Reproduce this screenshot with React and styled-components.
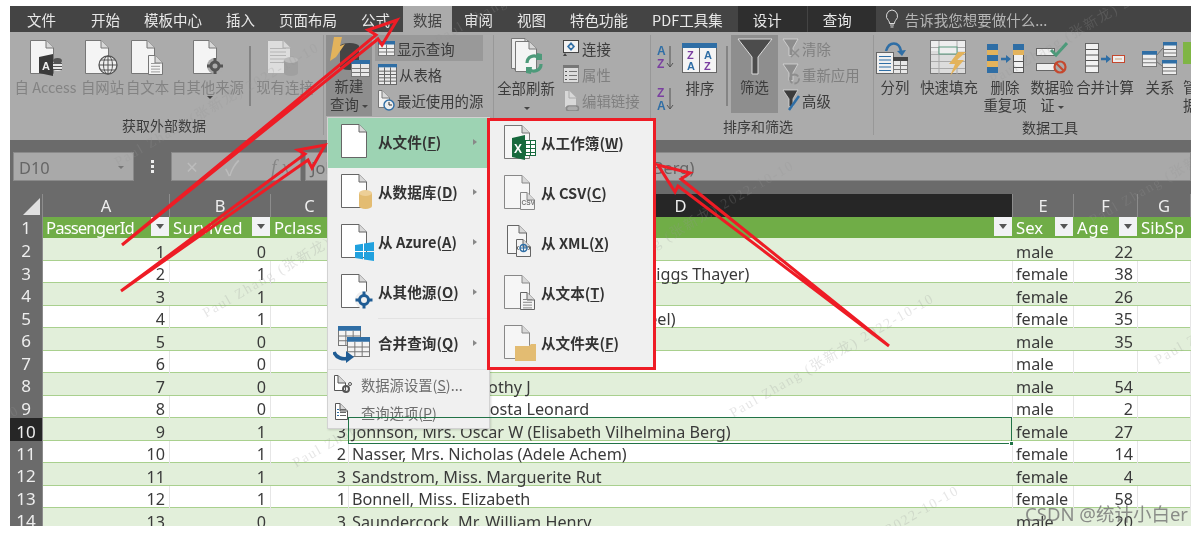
import React from "react";
import styled, { createGlobalStyle } from "styled-components";

const CJK = `"Noto Sans CJK SC", "Noto Sans", sans-serif`;
const SHEET = `"Noto Sans", "Noto Sans CJK SC", sans-serif`;
const RED = "#ee1c25";

const Global = createGlobalStyle`
  html, body { margin: 0; background: #fff; }
  body { font-family: ${CJK}; overflow: hidden; }
`;

const Frame = styled.div`
  position: relative; width: 1181px; height: 520px; margin: 6px 0 0 10px;
  overflow: hidden; background: #6b6b6b; filter: blur(0.45px);
`;

/* ---------- tabs ---------- */
const TabBar = styled.div`
  display: flex; height: 26px; background: #444; padding-left: 5px; align-items: stretch;
`;
const Tab = styled.div`
  display: flex; align-items: center; padding: 0 ${p => p.$pr ?? p.$pad ?? 12}px 0 ${p => p.$pad ?? 12}px;
  margin-left: ${p => p.$ml ?? 0}px; font-size: 14.5px; white-space: nowrap;
  color: ${p => (p.$active ? "#444" : "#e8e8e8")};
  background: ${p => (p.$active ? "#ababab" : p.$ctx ? "#2e2e2e" : "transparent")};
`;
const Hint = styled.div`
  display: flex; align-items: center; gap: 6px; margin-left: 9px; color: #b5b5b5; font-size: 14.5px;
`;

/* ---------- ribbon ---------- */
const Ribbon = styled.div`display: flex; height: 108px; background: #ababab;`;
const Group = styled.div`
  display: flex; flex-direction: column; width: ${p => p.$w}px; flex: none;
  border-right: 1px solid ${p => (p.$last ? "transparent" : "#989898")}; margin: 3px 0 5px; box-sizing: border-box;
`;
const GroupBody = styled.div`display: flex; height: 81px; padding: 0 ${p => p.$pad ?? 0}px;`;
const GroupLabel = styled.div`
  flex: 1; display: flex; align-items: center; justify-content: center; font-size: 14px; color: #3c3c3c;
  padding: 3px ${p => p.$pr ?? 0}px 0 ${p => p.$pl ?? 0}px;
`;
const BigButton = styled.div`
  display: flex; flex-direction: column; align-items: ${p => (p.$clip ? "flex-start" : "center")}; flex: none; box-sizing: border-box;
  width: ${p => p.$w}px; padding-top: ${p => p.$top ?? 4}px;
  margin-left: ${p => p.$ml ?? 0}px; overflow: ${p => (p.$clip ? "hidden" : "visible")};
  background: ${p => (p.$on ? "#8e8e8e" : "transparent")};
  color: ${p => (p.$off ? "#838383" : "#3c3c3c")};
`;
const IconBox = styled.div`
  height: ${p => p.$h ?? 38}px; display: flex; align-items: center; justify-content: center;
`;
const BigLabel = styled.div`
  font-size: 14.4px; line-height: 18px; text-align: center; white-space: nowrap; margin-top: ${p => p.$mt ?? 1}px;
`;
const Caret = styled.span`
  display: inline-block; width: 0; height: 0; vertical-align: middle; margin-left: 3px;
  border: 3px solid transparent; border-top: 3px solid #444; border-bottom: 0;
`;
const Divider = styled.div`
  width: 2px; height: 60px; background: #848484; flex: none;
  margin: 11px ${p => p.$mr ?? 4}px 0 ${p => p.$ml ?? 4}px;
`;
const SmallStack = styled.div`display: flex; flex-direction: column; margin-left: ${p => p.$ml ?? 0}px;`;
const SmallRow = styled.div`
  display: flex; align-items: center; gap: 2px; height: 26px; padding: 0 ${p => p.$pad ?? 0}px 0 2px; white-space: nowrap;
  font-size: 14.4px; color: ${p => (p.$off ? "#808080" : "#3c3c3c")};
  background: ${p => (p.$on ? "#999" : "transparent")};
`;
const SortColumn = styled.div`display: flex; flex-direction: column; gap: 14px; padding-top: 8px; margin-right: 5px;`;

/* ---------- formula bar ---------- */
const Strip = styled.div`height: ${p => p.$h}px; background: #6b6b6b;`;
const FormulaBar = styled.div`display: flex; height: 29px; background: #6b6b6b; padding-left: 3px;`;
const Field = styled.div`
  position: relative; display: flex; align-items: center; box-sizing: border-box; background: #a9a9a9; border: 1px solid #8a8a8a;
  width: ${p => p.$w}px; margin-left: ${p => p.$ml ?? 0}px; flex: ${p => (p.$w ? "none" : 1)};
  padding: 2px 5px 0; color: #666; font-family: ${SHEET}; font-size: 16.4px; overflow: hidden; white-space: nowrap;
`;
const NameCaret = styled.span`
  margin-left: auto; margin-right: 4px; border: 3.5px solid transparent; border-top: 3.5px solid #777; border-bottom: 0;
`;
const Dots = styled.div`
  width: 37px; flex: none; display: flex; flex-direction: column; gap: 2px; align-items: center; justify-content: center;
  i { display: block; width: 3px; height: 3px; background: #eee; }
`;
const FxIcons = styled.div`
  display: flex; align-items: center; width: 100%; color: #bcbcbc; font-size: 21px; gap: 27px; padding-left: 14px;
  em { margin-left: 5px; font-family: "Liberation Serif", serif; color: #858585; font-size: 19px; white-space: nowrap; }
`;

/* ---------- grid ---------- */
const COLS = "33px 127px 101px 78px 664px 61px 64px 53px";
const Grid = styled.div`font-family: ${SHEET};`;
const ColHead = styled.div`display: grid; grid-template-columns: ${COLS}; height: 21px; background: #6b6b6b;`;
const ColCell = styled.div`
  display: flex; align-items: center; justify-content: center; color: #eee; font-size: 16.5px;
  background: ${p => (p.$sel ? "#262626" : "#6b6b6b")}; border-right: 1px solid #8c8c8c;
`;
const Corner = styled.div`
  position: relative; border-right: 1px solid #8c8c8c;
  &::after { content: ""; position: absolute; right: 2px; bottom: 2px; border-style: solid; border-width: 0 0 17px 17px;
    border-color: transparent transparent #e0e0e0 transparent; }
`;
const Row = styled.div`
  display: grid; grid-template-columns: ${COLS}; height: ${p => p.$h ?? 22.5}px; box-sizing: border-box;
  background: ${p => (p.$head ? "#70ad47" : p.$band ? "#e2efda" : "#fff")};
  border-bottom: 1px solid ${p => (p.$head ? "#70ad47" : "#a9d08e")};
`;
const RowNo = styled.div`
  display: flex; align-items: center; justify-content: center; font-size: 17px; padding-top: 1px; box-sizing: border-box; color: #eee;
  background: ${p => (p.$sel ? "#262626" : "#6b6b6b")}; border-bottom: 1px solid #a8a8a8; margin-bottom: -1px;
  border-right: 1px solid #8c8c8c;
`;
const Cell = styled.div`
  position: relative; display: flex; align-items: center; justify-content: ${p => (p.$num ? "flex-end" : "flex-start")};
  padding: ${p => (p.$num ? `3px ${p.$pr ?? 4}px 0 0` : "3px 0 0 3px")}; font-size: 16.2px; color: #3a3a3a; white-space: nowrap; overflow: ${p => (p.$over ? "visible" : "hidden")};
  border-right: 1px solid ${p => (p.$band ? "transparent" : "#e6e6e6")}; box-sizing: border-box; min-width: 0;
`;
const HeadCell = styled.div`
  position: relative; display: flex; align-items: center; padding: 1px 0 0 3px; color: #fff; font-size: 16.7px; overflow: hidden; white-space: nowrap;
  letter-spacing: ${p => p.$track ?? 0}px;
`;
const FilterBtn = styled.div`
  position: absolute; right: 1px; top: 2px; width: 18px; height: 19px; background: #f1f2f4; display: flex;
  align-items: center; justify-content: center;
  &::after { content: ""; border: 4px solid transparent; border-top: 5px solid #555; border-bottom: 0; }
`;
const Selected = styled.div`
  position: absolute; inset: -1px 0 -1px -1px; border: 1.5px solid #217346; pointer-events: none; z-index: 1;
  &::after { content: ""; position: absolute; right: -3px; bottom: -3px; width: 5px; height: 5px; background: #217346; border: 1px solid #fff; box-sizing: border-box; }
`;

/* ---------- watermark ---------- */
const Mark = styled.div`
  position: absolute; left: ${p => p.$x}px; top: ${p => p.$y}px; transform-origin: left top; transform: rotate(-30deg);
  font-family: "Liberation Serif", "Noto Sans CJK SC", serif; font-size: 14px; letter-spacing: 1.7px; white-space: nowrap;
  color: rgba(150,150,150,.24); pointer-events: none;
`;
const Signature = styled.div`
  position: absolute; right: 3px; bottom: 0; font-family: "Noto Sans", "Noto Sans CJK SC", sans-serif; font-size: 18.5px; line-height: 24px; color: rgba(115,115,115,.8); white-space: nowrap;
`;

/* ---------- menu ---------- */
const Flyout = styled.div`position: absolute; left: 317px; top: 111px; display: flex; align-items: flex-start;`;
const MainMenu = styled.div`
  width: 163px; height: 312px; background: #f0f0f0; box-sizing: border-box; border: 1px solid #d2d2d2; flex: none;
  box-shadow: 1px 1px 2px rgba(0,0,0,.15);
`;
const MenuRow = styled.div`
  position: relative; display: flex; align-items: center; box-sizing: border-box; height: 50px;
  padding: 0 0 4px ${p => p.$pl ?? 12}px; font-size: 14.6px; font-weight: 700; color: #333;
  background: ${p => (p.$on ? "#9dd3b3" : "transparent")}; white-space: nowrap;
  u { text-underline-offset: 2px; }
  &::after { content: ""; display: ${p => (p.$sub ? "block" : "none")}; position: absolute; left: 145px; top: 21px;
    border: 3.5px solid transparent; border-left: 4px solid #888; border-right: 0; }
`;
const MenuIcon = styled.div`width: ${p => p.$w ?? 38}px; flex: none; display: flex; margin-top: 4px;`;
const MenuSep = styled.div`height: 1px; background: #e2e2e2; margin-left: ${p => p.$ml ?? 0}px;`;
const MenuSmall = styled.div`
  display: flex; align-items: center; height: 28px; gap: 8px; padding-left: 5px; font-size: 14.3px; color: #6e6e6e; white-space: nowrap;
`;
const SubMenu = styled.div`
  width: 169px; height: 252px; box-sizing: border-box; flex: none; margin: 1px 0 0 -3px; background: #f0f0f0;
  border: 3px solid ${RED}; position: relative;
`;
const SubList = styled.div`margin-top: -2px;`;
const Arrows = styled.svg`position: absolute; left: 0; top: 0; width: 1181px; height: 520px; pointer-events: none;`;

/* ---------- icon parts ---------- */
const Page = ({ x = 0, y = 0, w = 26, h = 34, f = "#f4f4f4", s = "#777" }) => (
  <g>
    <path d={`M${x + .5} ${y + .5}H${x + w - 8}L${x + w - .5} ${y + 8}V${y + h - .5}H${x + .5}Z`} fill={f} stroke={s} />
    <path d={`M${x + w - 8} ${y + .5}V${y + 8}H${x + w - .5}`} fill="#d8d8d8" stroke={s} />
  </g>
);
const Lines = ({ x, y, w, n, gap = 3, c = "#999" }) => (
  <g stroke={c}>{Array.from({ length: n }, (_, i) => <path key={i} d={`M${x} ${y + i * gap + .5}h${w}`} />)}</g>
);
const Cyl = ({ x, y, w, h, c, top }) => (
  <g>
    <path d={`M${x} ${y + 3}v${h - 6}a${w / 2} 3 0 0 0 ${w} 0v-${h - 6}z`} fill={c} />
    <ellipse cx={x + w / 2} cy={y + 3} rx={w / 2} ry="3" fill={top ?? c} />
  </g>
);
const Table = ({ x, y, w, h, rows = 3, cols = 2, head = "#2f6ea5", f = "#eee", s = "#777" }) => (
  <g>
    <rect x={x + .5} y={y + .5} width={w} height={h} fill={f} stroke={s} />
    <rect x={x} y={y} width={w + 1} height={h / (rows + 1)} fill={head} />
    {Array.from({ length: rows - 1 }, (_, i) => <path key={i} d={`M${x} ${y + .5 + (h * (i + 2)) / (rows + 1)}h${w}`} stroke={s} />)}
    {Array.from({ length: cols - 1 }, (_, i) => <path key={i} d={`M${x + .5 + (w * (i + 1)) / cols} ${y + h / (rows + 1)}v${h - h / (rows + 1)}`} stroke={s} />)}
  </g>
);
const Svg = ({ w, h, children }) => <svg width={w} height={h} viewBox={`0 0 ${w} ${h}`} style={{ display: "block", flex: "none" }}>{children}</svg>;
const Ring = ({ cx, cy, r = 5, c = "#555" }) => (
  <g>
    <circle cx={cx} cy={cy} r={r} fill="none" stroke={c} strokeWidth="3" />
    <path d={`M${cx - r - 4} ${cy}h4M${cx + r} ${cy}h4M${cx} ${cy - r - 4}v4M${cx} ${cy + r}v4`} stroke={c} strokeWidth="3" />
  </g>
);
const Funnel = ({ c = "#4d4d4d", w = 16 }) => (
  <path d={`M1 1H${w}L${w / 2 + 3} ${w * .62}V${w * 1.1}H${w / 2 - 1}V${w * .62}Z`} fill={c} stroke="#d8d8d8" strokeWidth=".8" />
);

const icons = {
  access: <Svg w={36} h={36}><Page x={2} y={0} w={24} h={34} /><path d="M11 17l14-3v22l-14-3z" fill="#3a3a3a" /><text x="14" y="30" fontSize="11" fontWeight="700" fill="#eee" fontFamily="Liberation Sans">A</text><Cyl x={25} y={18} w={9} h={13} c="#e8e8e8" top="#555" /><Lines x={25} y={23} w={9} n={3} c="#555" /></Svg>,
  web: <Svg w={36} h={36}><Page x={0} y={0} w={24} h={34} /><circle cx="23" cy="25" r="9" fill="#eee" stroke="#555" strokeWidth="1.3" /><path d="M14 25h18M23 16v18M16 20h14M16 30h14" stroke="#555" /><ellipse cx="23" cy="25" rx="4.5" ry="9" fill="none" stroke="#555" /></Svg>,
  text: <Svg w={34} h={36}><Page x={0} y={0} w={24} h={34} /><Page x={17} y={15} w={15} h={20} /><Lines x={20} y={23} w={9} n={4} gap={2.8} /></Svg>,
  other: <Svg w={36} h={36}><Page x={3} y={0} w={24} h={34} /><circle cx="25" cy="26" r="8" fill="#ababab" /><Ring cx={25} cy={26} r={4} /></Svg>,
  existing: <Svg w={36} h={36}><Page x={0} y={0} w={24} h={34} f="#ddd" s="#aaa" /><Lines x={3} y={8} w={16} n={5} gap={3.5} c="#b5b5b5" /><Cyl x={17} y={17} w={14} h={19} c="#a0a0a0" top="#bbb" /></Svg>,
  newq: <Svg w={44} h={42}><Cyl x={13} y={8} w={19} h={27} c="#444" /><path d="M15 2H7L3 26l6-4 9-13-5 2z" fill="#e3b35c" /><Table x={24} y={25} w={18} h={16} rows={3} cols={2} f="#e8e8e8" /></Svg>,
  show: <Svg w={18} h={18}><Table x={1} y={2} w={16} h={14} rows={3} cols={2} head="#2f6ea5" f="#f0f0f0" /></Svg>,
  table: <Svg w={20} h={22}><Table x={1} y={1} w={18} h={20} rows={5} cols={3} head="#2f6ea5" f="#eaeaea" s="#666" /></Svg>,
  recent: <Svg w={18} h={22}><Page x={1} y={1} w={12} h={18} /><circle cx="12" cy="16" r="5" fill="#eee" stroke="#2f6ea5" strokeWidth="1.4" /><path d="M12 13v3h3" stroke="#333" fill="none" /></Svg>,
  refresh: (
    <Svg w={38} h={44}>
      <Page x={7} y={5} w={22} h={30} f="#eee" /><Page x={4} y={3} w={22} h={31} f="#eee" /><Page x={8} y={6} w={22} h={31} />
      <path d="M20 28a7 7 0 0 1 12-5M34 29a7 7 0 0 1-12 5" fill="none" stroke="#4d9a7a" strokeWidth="3.2" />
      <path d="M30 18l5 1v6h-6zM24 39l-5-1v-6h6z" fill="#4d9a7a" />
    </Svg>
  ),
  conn: <Svg w={18} h={18}><rect x="1.5" y="1.5" width="15" height="12" fill="#f2f2f2" stroke="#444" /><path d="M3 14l-2 3h4z" fill="#444" /><path d="M9 3l4 4.500-4 4.500-4-4.500z" fill="#2f6ea5" /><circle cx="9" cy="7.500" r="1.500" fill="#eee" /></Svg>,
  prop: <Svg w={18} h={20}><rect x="1.500" y="1.500" width="15" height="17" fill="#ddd" stroke="#888" /><rect x="1" y="1" width="16" height="3" fill="#777" /><Lines x={7} y={7} w={8} n={3} gap={4} c="#777" /><Lines x={3} y={7} w={2} n={3} gap={4} c="#555" /></Svg>,
  links: <Svg w={18} h={22}><Page x={2} y={1} w={13} h={18} f="#d8d8d8" s="#aaa" /><path d="M7 17h7a2.500 2.500 0 0 1 0 5H7a2.500 2.500 0 0 1 0-5z" fill="none" stroke="#888" strokeWidth="1.500" /></Svg>,
  az: <Svg w={18} h={28}><text x="0" y="12" fontSize="12" fontWeight="700" fill="#2f6ea5" fontFamily="Liberation Sans">A</text><text x="0" y="25" fontSize="12" fontWeight="700" fill="#7a3fa0" fontFamily="Liberation Sans">Z</text><path d="M13 3v21M10 20l3 4 3-4" stroke="#555" fill="none" /></Svg>,
  za: <Svg w={18} h={28}><text x="0" y="12" fontSize="12" fontWeight="700" fill="#7a3fa0" fontFamily="Liberation Sans">Z</text><text x="0" y="25" fontSize="12" fontWeight="700" fill="#2f6ea5" fontFamily="Liberation Sans">A</text><path d="M13 3v21M10 20l3 4 3-4" stroke="#555" fill="none" /></Svg>,
  sort: <Svg w={36} h={30}><rect x=".5" y=".5" width="34" height="29" fill="#f4f4f4" stroke="#666" /><rect x="0" y="0" width="35" height="5" fill="#2f6ea5" /><path d="M17.500 5v25" stroke="#666" /><g fontSize="11" fontWeight="700" fontFamily="Liberation Sans"><text x="5" y="16" fill="#7a3fa0">Z</text><text x="5" y="27" fill="#2f6ea5">A</text><text x="22" y="16" fill="#2f6ea5">A</text><text x="22" y="27" fill="#7a3fa0">Z</text></g></Svg>,
  funnel: <Svg w={36} h={38}><path d="M1 1H35L21 19V36H15V19Z" fill="#4c4c4c" stroke="#dcdcdc" /></Svg>,
  clear: <Svg w={18} h={20}><Funnel c="#8d8d8d" /><path d="M9 11l8 8M17 11l-8 8" stroke="#8d8d8d" strokeWidth="1.500" /></Svg>,
  reapply: <Svg w={18} h={22}><Funnel c="#8d8d8d" /><circle cx="12.500" cy="16" r="4.500" fill="none" stroke="#8d8d8d" strokeWidth="1.800" strokeDasharray="7 2" /></Svg>,
  adv: <Svg w={18} h={22}><Funnel c="#3c3c3c" /><path d="M17 7L7 21" stroke="#2f6ea5" strokeWidth="2.500" /></Svg>,
  split: <Svg w={38} h={32}><rect x=".5" y="10.500" width="17" height="21" fill="#f0f0f0" stroke="#666" /><Lines x={3} y={14} w={12} n={5} gap={3.500} c="#2f6ea5" /><Table x={17} y={15} w={14} h={16} rows={3} cols={2} head="#444" f="#e8e8e8" /><path d="M10 9c3-10 13-10 15 0" fill="none" stroke="#2f6ea5" strokeWidth="2.500" /><path d="M21 9l5 5 4-6z" fill="#2f6ea5" /></Svg>,
  flash: <Svg w={38} h={36}><rect x=".5" y=".5" width="35" height="33" fill="#dcdcdc" stroke="#777" /><rect x="1" y="1" width="34" height="10" fill="#eee" /><Lines x={1} y={7} w={34} n={4} gap={7} c="#aaa" /><path d="M9 1v33M27 1v33" stroke="#aaa" /><rect x="9" y="7" width="18" height="7" fill="#eee" stroke="#5d9c80" /><path d="M36 12h-8l-9 12h6l-5 12 14-16h-7z" fill="#e3b35c" /></Svg>,
  dedupe: <Svg w={38} h={30}><rect x="1" y="1" width="11" height="29" fill="#2f6ea5" /><rect x="1" y="7" width="11" height="5" fill="#e3b35c" /><rect x="1" y="18" width="11" height="6" fill="#e3b35c" /><path d="M15 16h6" stroke="#2f6ea5" strokeWidth="2.500" /><path d="M20 12l5 4-5 4z" fill="#2f6ea5" /><rect x="27.500" y="1.500" width="10" height="28" fill="#f0f0f0" stroke="#555" /><rect x="27" y="1" width="11" height="6" fill="#2f6ea5" /><rect x="27" y="7" width="11" height="5" fill="#e3b35c" /><Lines x={27} y={18} w={11} n={2} gap={6} c="#555" /></Svg>,
  valid: <Svg w={32} h={32}><rect x=".5" y="6.500" width="18" height="7" fill="#f0f0f0" stroke="#666" /><rect x=".5" y="21.500" width="18" height="7" fill="#f0f0f0" stroke="#666" /><path d="M15 8l5 5 11-12" fill="none" stroke="#4d9a7a" strokeWidth="3" /><circle cx="24" cy="25" r="5.500" fill="none" stroke="#c5482e" strokeWidth="2.200" /><path d="M20 21l8 8" stroke="#c5482e" strokeWidth="2.200" /></Svg>,
  merge: <Svg w={40} h={30}><rect x=".5" y=".5" width="13" height="29" fill="#f2f2f2" stroke="#666" /><Lines x={1} y={6} w={13} n={4} gap={5.500} c="#555" /><path d="M16 16h6" stroke="#2f6ea5" strokeWidth="2.500" /><path d="M21 12l5 4-5 4z" fill="#2f6ea5" /><rect x="27.500" y="12.500" width="12" height="7" fill="#eee" stroke="#c5482e" /><path d="M30 16h7" stroke="#c9a27a" /></Svg>,
  rel: <Svg w={36} h={34}><Table x={0} y={10} w={14} h={15} rows={3} cols={1} /><Table x={21} y={1} w={13} h={14} rows={3} cols={1} /><Table x={20} y={19} w={14} h={14} rows={3} cols={1} /><path d="M14 15l7-8M14 20l6 5" stroke="#777" /></Svg>,
  manage: <Svg w={12} h={34}><rect x="0" y="1" width="12" height="22" fill="#7fb545" /></Svg>,
  bulb: <Svg w={14} h={20}><path d="M7 1a6 6 0 0 0-3.500 10.500c.8.800 1 2 1 3h5c0-1 .2-2.200 1-3A6 6 0 0 0 7 1z" fill="none" stroke="#dcdcdc" /><path d="M5 16h4M5.500 18h3" stroke="#dcdcdc" /></Svg>,
};

const mPage = { w: 26, h: 34, f: "#fff", s: "#666" };
const MFile = ({ children, w = 34, h = 40 }) => <Svg w={w} h={h}>{children}</Svg>;
const menuIcons = {
  file: <MFile><Page x={1} y={1} {...mPage} /></MFile>,
  db: <MFile><Page x={1} y={1} {...mPage} /><Cyl x={19} y={17} w={13} h={19} c="#e3bc72" top="#edcf97" /></MFile>,
  azure: <MFile><Page x={1} y={1} {...mPage} /><path d="M15 22l8-1.200v7.200h-8zM24 20.600l10-1.500v8.900h-10zM15 29h8v7.200l-8-1.200zM24 29h10v8.900l-10-1.500z" fill="#21a1de" /></MFile>,
  other: <MFile><Page x={1} y={1} {...mPage} /><circle cx="24" cy="27" r="9" fill="#f0f0f0" /><Ring cx={24} cy={27} r={4.500} c="#1f5c94" /></MFile>,
  merge: <Svg w={38} h={38}><Table x={5} y={1} w={22} h={19} rows={3} cols={3} head="#2f6ea5" f="#f4f4f4" /><Table x={14} y={12} w={22} h={19} rows={3} cols={3} head="#2f6ea5" f="#f4f4f4" /><path d="M1 27c2 6 9 8 15 6" fill="none" stroke="#1f5c94" strokeWidth="3.500" /><path d="M13 26l8 6-8 6z" fill="#1f5c94" /></Svg>,
  wb: <MFile><Page x={1} y={1} {...mPage} s="#777" f="#f6f6f6" /><path d="M9 14l13-3v25l-13-3z" fill="#17693d" /><text x="11" y="29" fontSize="12" fontWeight="700" fill="#fff" fontFamily="Liberation Sans">X</text><rect x="22.500" y="16.500" width="10" height="15" fill="#fff" stroke="#17693d" /><Lines x={23} y={20} w={9} n={3} gap={4} c="#17693d" /><path d="M27.500 17v14" stroke="#17693d" /></MFile>,
  csv: <MFile><Page x={1} y={1} {...mPage} s="#888" f="#f6f6f6" /><Page x={17} y={18} w={15} h={18} s="#888" f="#f4f4f4" /><text x="18.500" y="31" fontSize="6.500" fill="#777" fontFamily="Liberation Sans">CSV</text></MFile>,
  xml: <MFile><Page x={4} y={1} w={20} h={29} s="#666" f="#f6f6f6" /><Page x={13} y={15} w={15} h={18} s="#666" f="#f4f4f4" /><circle cx="20.500" cy="24" r="3.500" fill="none" stroke="#2f6ea5" strokeWidth="1.500" /><path d="M17 24h7M20.500 20.500v7" stroke="#2f6ea5" /><path d="M15.500 22l-1.500 2 1.500 2M25.500 22l1.500 2-1.500 2" stroke="#555" fill="none" /></MFile>,
  txt: <MFile><Page x={1} y={1} {...mPage} s="#888" f="#f6f6f6" /><Page x={17} y={18} w={15} h={18} s="#666" f="#f4f4f4" /><Lines x={20} y={25} w={9} n={4} gap={2.800} c="#888" /></MFile>,
  folder: <MFile><Page x={1} y={1} {...mPage} s="#888" f="#f6f6f6" /><path d="M12 22h14l2-2h5v17H12z" fill="#e3bc72" /></MFile>,
  ds: <Svg w={20} h={20}><Page x={1} y={1} w={12} h={16} s="#555" f="#fff" /><circle cx="13" cy="15" r="3" fill="none" stroke="#555" strokeWidth="2" /><circle cx="17" cy="10" r="1.500" fill="none" stroke="#555" /></Svg>,
  opt: <Svg w={20} h={20}><Page x={2} y={1} w={13} h={17} s="#555" f="#fff" /><Lines x={7} y={7} w={6} n={3} gap={3} c="#666" /><Lines x={4} y={7} w={2} n={3} gap={3} c="#2f6ea5" /></Svg>,
};

const rows = [
  [1, 0, 3, "Braund, Mr. Owen Harris", "male", 22],
  [2, 1, 1, "Cumings, Mrs. John Bradley (Florence Briggs Thayer)", "female", 38],
  [3, 1, 3, "Heikkinen, Miss. Laina", "female", 26],
  [4, 1, 1, "Futrelle, Mrs. Jacques Heath (Lily May Peel)", "female", 35],
  [5, 0, 3, "Allen, Mr. William Henry", "male", 35],
  [6, 0, 3, "Moran, Mr. James", "male", ""],
  [7, 0, 1, "McCarthy, Mr. Timothy J", "male", 54],
  [8, 0, 3, "Palsson, Master. Gosta Leonard", "male", 2],
  [9, 1, 3, "Johnson, Mrs. Oscar W (Elisabeth Vilhelmina Berg)", "female", 27],
  [10, 1, 2, "Nasser, Mrs. Nicholas (Adele Achem)", "female", 14],
  [11, 1, 3, "Sandstrom, Miss. Marguerite Rut", "female", 4],
  [12, 1, 1, "Bonnell, Miss. Elizabeth", "female", 58],
  [13, 0, 3, "Saundercock, Mr. William Henry", "male", 20],
];

const MARK = "Paul Zhang (张新龙) 2022-10-10";
const marks = [
  [100, 147], [188, 298], [715, 398], [740, 590], [575, 265], [975, 65], [1075, 205], [-200, 510], [278, 448], [1140, 345], [420, 25],
];

const subItems = [
  ["wb", "从工作簿(", "W"], ["csv", "从 CSV(", "C"], ["xml", "从 XML(", "X"], ["txt", "从文本(", "T"], ["folder", "从文件夹(", "F"],
];

export default function App() {
  return (
    <>
      <Global />
      <Frame>
        <TabBar>
          <Tab>文件</Tab>
          <Tab $ml={11}>开始</Tab>
          <Tab>模板中心</Tab>
          <Tab>插入</Tab>
          <Tab>页面布局</Tab>
          <Tab>公式</Tab>
          <Tab $active $pad={10} $ml={1}>数据</Tab>
          <Tab>审阅</Tab>
          <Tab>视图</Tab>
          <Tab>特色功能</Tab>
          <Tab>PDF工具集</Tab>
          <Tab $ctx $pad={15} $pr={25} $ml={3}>设计</Tab>
          <Tab $ctx $pad={15} $pr={24} $ml={1}>查询</Tab>
          <Hint>{icons.bulb}告诉我您想要做什么...</Hint>
        </TabBar>

        <Ribbon>
          <Group $w={314}>
            <GroupBody>
              <BigButton $w={71} $off><IconBox>{icons.access}</IconBox><BigLabel>自 Access</BigLabel></BigButton>
              <BigButton $w={43} $off><IconBox>{icons.web}</IconBox><BigLabel>自网站</BigLabel></BigButton>
              <BigButton $w={47} $off><IconBox>{icons.text}</IconBox><BigLabel>自文本</BigLabel></BigButton>
              <BigButton $w={74} $off><IconBox>{icons.other}</IconBox><BigLabel>自其他来源</BigLabel><Caret /></BigButton>
              <Divider />
              <BigButton $w={60} $off><IconBox>{icons.existing}</IconBox><BigLabel>现有连接</BigLabel></BigButton>
            </GroupBody>
            <GroupLabel $pr={5}>获取外部数据</GroupLabel>
          </Group>

          <Group $w={170}>
            <GroupBody $pad={2}>
              <BigButton $w={46} $on $top={0}><IconBox $h={42}>{icons.newq}</IconBox><BigLabel $mt={0}>新建<br />查询<Caret /></BigLabel></BigButton>
              <SmallStack $ml={3}>
                <SmallRow $on $pad={1}>{icons.show}显示查询</SmallRow>
                <SmallRow>{icons.table}从表格</SmallRow>
                <SmallRow>{icons.recent}最近使用的源</SmallRow>
              </SmallStack>
            </GroupBody>
            <GroupLabel />
          </Group>

          <Group $w={157}>
            <GroupBody $pad={3}>
              <BigButton $w={58} $top={0}><IconBox $h={44}>{icons.refresh}</IconBox><BigLabel $mt={0}>全部刷新<br /><Caret /></BigLabel></BigButton>
              <SmallStack $ml={5}>
                <SmallRow>{icons.conn}连接</SmallRow>
                <SmallRow $off>{icons.prop}属性</SmallRow>
                <SmallRow $off>{icons.links}编辑链接</SmallRow>
              </SmallStack>
            </GroupBody>
            <GroupLabel />
          </Group>

          <Group $w={223}>
            <GroupBody $pad={6}>
              <SortColumn>{icons.az}{icons.za}</SortColumn>
              <BigButton $w={40} $top={6}><IconBox $h={34}>{icons.sort}</IconBox><BigLabel $mt={4}>排序</BigLabel></BigButton>
              <Divider $ml={6} $mr={3} />
              <BigButton $w={47} $on $top={3}><IconBox>{icons.funnel}</IconBox><BigLabel $mt={2}>筛选</BigLabel></BigButton>
              <SmallStack $ml={2}>
                <SmallRow $off>{icons.clear}清除</SmallRow>
                <SmallRow $off>{icons.reapply}重新应用</SmallRow>
                <SmallRow>{icons.adv}高级</SmallRow>
              </SmallStack>
            </GroupBody>
            <GroupLabel $pr={8}>排序和筛选</GroupLabel>
          </Group>

          <Group $w={317} $last>
            <GroupBody $pad={1}>
              <BigButton $w={40}><IconBox>{icons.split}</IconBox><BigLabel>分列</BigLabel></BigButton>
              <BigButton $w={64} $ml={2}><IconBox>{icons.flash}</IconBox><BigLabel>快速填充</BigLabel></BigButton>
              <BigButton $w={48}><IconBox>{icons.dedupe}</IconBox><BigLabel>删除<br />重复项</BigLabel></BigButton>
              <BigButton $w={46}><IconBox>{icons.valid}</IconBox><BigLabel>数据验<br />证<Caret /></BigLabel></BigButton>
              <BigButton $w={60}><IconBox>{icons.merge}</IconBox><BigLabel>合并计算</BigLabel></BigButton>
              <BigButton $w={46} $ml={2}><IconBox>{icons.rel}</IconBox><BigLabel>关系</BigLabel></BigButton>
              <BigButton $w={13} $clip><IconBox>{icons.manage}</IconBox><BigLabel>管<br />据</BigLabel></BigButton>
            </GroupBody>
            <GroupLabel $pl={36}>数据工具</GroupLabel>
          </Group>
        </Ribbon>

        <Strip $h={12} />
        <FormulaBar>
          <Field $w={121}>D10<NameCaret /></Field>
          <Dots><i /><i /><i /></Dots>
          <Field $w={130} style={{ padding: 0 }}><FxIcons>×<span>✓</span><em>f x</em></FxIcons></Field>
          <Field $ml={4}>Johnson, Mrs. Oscar W (Elisabeth Vilhelmina Berg)</Field>
        </FormulaBar>
        <Strip $h={13} />

        <Grid>
          <ColHead>
            <Corner />
            {["A", "B", "C", "D", "E", "F", "G"].map(c => <ColCell key={c} $sel={c === "D"}>{c}</ColCell>)}
          </ColHead>
          <Row $head $h={23}>
            <RowNo>1</RowNo>
            <HeadCell $track={-0.9}>PassengerId<FilterBtn /></HeadCell>
            <HeadCell $track={0.3}>Survived<FilterBtn /></HeadCell>
            <HeadCell>Pclass<FilterBtn /></HeadCell>
            <HeadCell><FilterBtn /></HeadCell>
            <HeadCell>Sex<FilterBtn /></HeadCell>
            <HeadCell $track={0.6}>Age<FilterBtn /></HeadCell>
            <HeadCell>SibSp</HeadCell>
          </Row>
          {rows.map((r, i) => {
            const band = i % 2 === 0;
            const sel = i === 8;
            return (
              <Row key={r[0]} $band={band}>
                <RowNo $sel={sel}>{i + 2}</RowNo>
                <Cell $num $band={band}>{r[0]}</Cell>
                <Cell $num $band={band}>{r[1]}</Cell>
                <Cell $num $pr={2} $band={band}>{r[2]}</Cell>
                <Cell $band={band} $over={sel}>{r[3]}{sel && <Selected />}</Cell>
                <Cell $band={band}>{r[4]}</Cell>
                <Cell $num $band={band}>{r[5]}</Cell>
                <Cell $band={band} />
              </Row>
            );
          })}
        </Grid>

        {marks.map(([x, y], i) => <Mark key={i} $x={x} $y={y}>{MARK}</Mark>)}
        <Signature>CSDN @统计小白er</Signature>

        <Flyout>
          <MainMenu>
            <MenuRow $on $sub><MenuIcon>{menuIcons.file}</MenuIcon>从文件(<u>F</u>)</MenuRow>
            <MenuRow $sub><MenuIcon>{menuIcons.db}</MenuIcon>从数据库(<u>D</u>)</MenuRow>
            <MenuRow $sub><MenuIcon>{menuIcons.azure}</MenuIcon>从 Azure(<u>A</u>)</MenuRow>
            <MenuRow $sub><MenuIcon>{menuIcons.other}</MenuIcon>从其他源(<u>O</u>)</MenuRow>
            <MenuSep $ml={50} />
            <MenuRow $sub $pl={5}><MenuIcon $w={45}>{menuIcons.merge}</MenuIcon>合并查询(<u>Q</u>)</MenuRow>
            <MenuSep />
            <MenuSmall>{menuIcons.ds}<span>数据源设置(<u>S</u>)...</span></MenuSmall>
            <MenuSmall>{menuIcons.opt}<span>查询选项(<u>P</u>)</span></MenuSmall>
          </MainMenu>
          <SubMenu>
            <SubList>
              {subItems.map(([ic, label, key]) => (
                <MenuRow key={ic} $pl={13}><MenuIcon>{menuIcons[ic]}</MenuIcon>{label}<u>{key}</u>)</MenuRow>
              ))}
            </SubList>
          </SubMenu>
        </Flyout>

        <Arrows viewBox="0 0 1181 520" fill="none" stroke={RED} strokeWidth="3" strokeLinejoin="miter">
          <path d="M112 239L366 29L358 24L387 14L372 39L368 33Z" />
          <path d="M111 285L295 148L288 144L315 139L302 162L298 154Z" />
          <path d="M879 340L671 173L680 167L648 159L665 186L668 180Z" />
        </Arrows>
      </Frame>
    </>
  );
}
